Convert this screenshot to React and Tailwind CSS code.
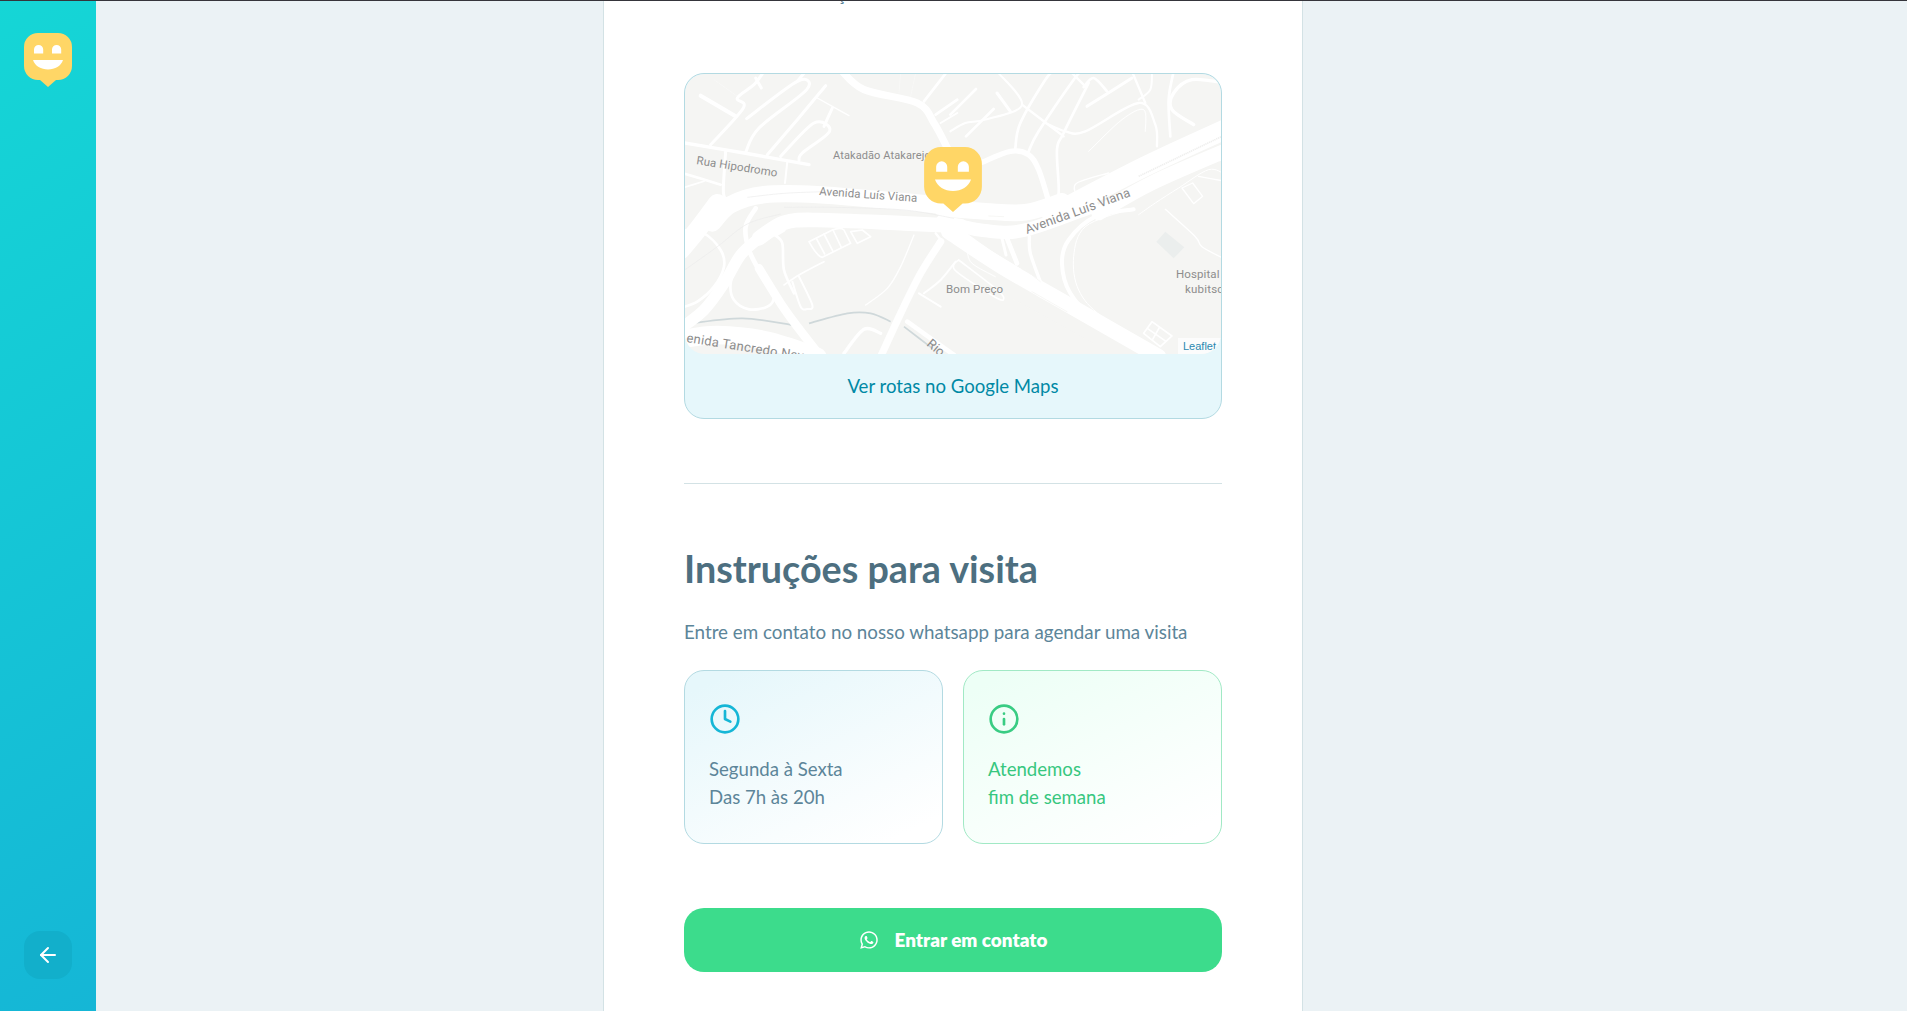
import React from 'react';
import { FiArrowLeft, FiClock, FiInfo } from 'react-icons/fi';
import { FaWhatsapp } from 'react-icons/fa';

// map drawing, traced in 3x crops of the map, one list per quadrant
const smooth = (pts) => {
  let d = `M${pts[0][0]} ${pts[0][1]}`;
  for (let i = 0; i < pts.length - 1; i++) {
    const a = pts[i - 1] || pts[i];
    const b = pts[i];
    const c = pts[i + 1];
    const e = pts[i + 2] || c;
    const c1 = [b[0] + (c[0] - a[0]) / 6, b[1] + (c[1] - a[1]) / 6];
    const c2 = [c[0] - (e[0] - b[0]) / 6, c[1] - (e[1] - b[1]) / 6];
    d += ` C${c1[0].toFixed(1)} ${c1[1].toFixed(1)} ${c2[0].toFixed(1)} ${c2[1].toFixed(1)} ${c[0]} ${c[1]}`;
  }
  return d;
};

const topLeft = [
  [10, [[-10, 208], [180, 240], [375, 275]]],
  [12, [[50, 68], [155, 130]]],
  [9, [[80, 215], [178, 105], [160, 75], [210, 35], [240, -5]]],
  [9, [[215, 15], [232, 45]]],
  [9, [[188, 137], [340, 25], [368, 50], [225, 165], [185, 238]]],
  [9, [[340, 25], [365, -5]]],
  [9, [[250, 245], [340, 140], [425, 38]]],
  [4, [[400, 75], [495, 128]]],
  [9, [[445, 105], [420, 160]]],
  [9, [[290, 250], [390, 150], [437, 175], [355, 240], [345, 262]]],
  [9, [[125, 235], [118, 350], [125, 380]]],
  [6, [[310, 265], [303, 330]]],
  [8, [[-5, 300], [110, 335]]],
  [5, [[-5, 345], [60, 325]]],
  [22, [[470, -10], [540, 50], [700, 90], [750, 150], [790, 225]]],
  [8, [[720, 85], [790, -5]]],
  [8, [[755, 125], [820, 80]]],
  [6, [[770, 150], [820, 120]]],
  [1, [[90, 20], [160, 70]]],
  [1, [[645, 60], [650, 0]]],
  [1, [[680, 70], [695, 0]]],
  // upper carriageway of the avenue
  [52, [[85, 450], [140, 395], [240, 365], [400, 365], [720, 392], [830, 405]]],
];

const topRight = [
  [8, [[-5, 125], [72, 48]]],
  [9, [[135, 60], [175, 115]]],
  [8, [[42, 190], [125, 108]]],
  [6, [[-5, 175], [40, 150], [100, 140], [210, 95], [135, -5]]],
  [16, [[90, 268], [175, 235], [230, 245], [260, 290], [290, 385]]],
  [8, [[190, 225], [205, 150], [280, 20], [305, -5]]],
  [8, [[230, 235], [260, 175], [365, 20], [390, -5]]],
  [7, [[210, 95], [335, 190]]],
  [7, [[355, -5], [400, 40]]],
  [8, [[410, 30], [335, 180], [315, 230], [320, 360], [300, 388]]],
  [7, [[280, 150], [340, 175], [400, 175], [560, 90], [610, 155], [615, 220]]],
  [9, [[405, 100], [540, 15]]],
  [8, [[395, 42], [425, 15], [465, 55]]],
  [7, [[540, -5], [580, 90]]],
  [6, [[600, -5], [595, 50], [560, 80]]],
  [3, [[410, 235], [510, 140], [575, 110], [580, 175]]],
  [10, [[820, 30], [720, 20], [665, 60], [660, 110], [725, 155]]],
  [8, [[665, -5], [650, 80], [655, 190]]],
  [4, [[370, 360], [375, 330], [470, 300]]],
  [3, [[820, 305], [770, 290], [680, 345], [610, 390], [560, 425]]],
  [4, [[740, 310], [820, 325]]],
  [50, [[-30, 405], [100, 415], [220, 418], [330, 385]]],
  [60, [[840, 160], [580, 280], [300, 425]]],
  [44, [[840, 225], [600, 330], [440, 420]]],
];

const bottomLeft = [
  [56, [[100, -20], [40, 60], [-10, 120]]],
  [8, [[-5, 60], [60, 70], [110, 120], [120, 170], [90, 230], [40, 275], [-5, 292]]],
  [44, [[830, 48], [660, 40], [400, 30], [300, 38], [225, 85]]],
  [34, [[225, 85], [170, 135], [120, 220], [60, 300], [-10, 355]]],
  [14, [[215, -5], [185, 50], [195, 120], [230, 190]]],
  [26, [[225, 175], [290, 280], [340, 350], [410, 440]]],
  [8, [[272, 75], [295, 100], [300, 180], [330, 250]]],
  [6, [[345, 200], [385, 285], [370, 297], [350, 290], [325, 215]]],
  [5, [[300, 225], [345, 195], [420, 155]]],
  [8, [[165, 140], [140, 220], [150, 270], [195, 298], [250, 290], [270, 260], [250, 220]]],
  [10, [[275, 75], [300, 60]]],
  [4, [[690, 75], [650, 170], [610, 235], [545, 285]]],
  [22, [[770, 95], [710, 190], [650, 310], [590, 440]]],
  [7, [[775, 95], [755, 70]]],
  [6, [[815, 155], [770, 210], [720, 250]]],
  [6, [[705, 250], [770, 290]]],
  [14, [[670, 335], [810, 435]]],
  [10, [[590, 370], [540, 358], [480, 430]]],
  [55, [[-10, 388], [100, 375], [250, 392], [400, 440]]],
];

const bottomRight = [
  [40, [[-30, 35], [100, 62], [220, 60], [420, -10]]],
  [46, [[-10, 65], [150, 170], [350, 285], [620, 440]]],
  [14, [[30, 68], [110, 125], [200, 180]]],
  [9, [[150, 85], [162, 135]]],
  [14, [[165, 85], [195, 160]]],
  [10, [[232, 80], [235, 130], [265, 215]]],
  [12, [[545, -2], [430, 20], [350, 90], [330, 160], [355, 250], [430, 330], [575, 425]]],
  [3, [[525, 0], [400, 50], [365, 140], [380, 240], [450, 320], [610, 415]]],
  [4, [[640, -2], [730, 80], [750, 110], [820, 148]]],
  [5, [[20, 150], [130, 235], [155, 262], [135, 265], [20, 190], [5, 165], [20, 150]]],
  [3, [[45, 120], [60, 160], [130, 200]]],
];

const Roads = ({ list, ox, oy }) => (
  <g transform={`translate(${ox} ${oy}) scale(0.3333)`} fill="none" stroke="#ffffff" strokeLinecap="round" strokeLinejoin="round">
    {list.map(([w, pts], i) => (
      <path key={i} d={smooth(pts)} strokeWidth={w} />
    ))}
  </g>
);

const MapDrawing = () => (
  <svg width="538" height="280" viewBox="0 0 538 280" className="block">
    <rect width="538" height="280" fill="#f5f5f3" />
    <g transform="translate(267 136) scale(0.3333)">
      <polygon points="640,65 697,112 665,145 613,95" fill="#ebeeed" />
    </g>
    <g transform="translate(-1 136) scale(0.3333)" fill="none" stroke="#cfd8da" strokeWidth="5">
      <path d={smooth([[20, 340], [175, 325], [325, 345]])} />
      <path d={smooth([[375, 340], [490, 310], [560, 310], [620, 335]])} />
      <path d={smooth([[660, 350], [745, 415]])} />
    </g>
    <Roads list={bottomLeft} ox={-1} oy={136} />
    <Roads list={bottomRight} ox={267} oy={136} />
    <Roads list={topLeft} ox={-1} oy={-1} />
    <Roads list={topRight} ox={267} oy={-1} />

    {/* fine lines, parking lots */}
    <g transform="translate(-1 136) scale(0.3333)" fill="none" stroke="#ffffff" strokeLinejoin="round" strokeLinecap="round" strokeWidth="5">
      <path d="M375 95 L445 60 Q470 50 480 60 L500 100 L415 142 Q400 140 375 95 Z" />
      <path d="M397 85 L422 132 M420 72 L447 124 M447 60 L472 112" />
      <path d="M500 65 L535 60 L560 80 L520 100 Z" />
    </g>
    <g transform="translate(-1 136) scale(0.3333)" fill="none" stroke="#ececeb" strokeWidth="2">
      <path d={smooth([[-5, 185], [100, 110], [190, 42], [290, 12]])} />
      <path d={smooth([[190, -38], [300, -50], [420, -55]])} />
      <path d={smooth([[300, -8], [450, -8], [660, 0], [810, 25]])} />
    </g>
    <g transform="translate(267 136) scale(0.3333)" fill="none">
      <g stroke="#ffffff" strokeWidth="5" strokeLinejoin="round">
        <path d="M600 335 L660 378 L625 410 L575 370 Z M586 355 L643 395 M622 353 L600 392" />
      </g>
      <g stroke="#f5f5f3" strokeWidth="2.5" strokeLinecap="round">
        <path d="M240 245 L345 305" />
        <path d="M215 175 L265 215" />
        <path d="M160 255 L430 405" />
        <path d="M110 18 L155 20" />
      </g>
    </g>
    <g transform="translate(267 -1) scale(0.3333)" fill="none" stroke="#ffffff" strokeLinejoin="round">
      <path d="M690 345 L722 330 L752 370 L725 392 Z" strokeWidth="4" />
      <path d="M560 310 L810 190" stroke="#efefee" strokeWidth="5" strokeDasharray="4 2" />
    </g>

    <g fill="#8d8d8d" fontSize="11.5" style={{ fontFamily: '"Roboto", sans-serif' }}>
      <text x="148" y="85" fontSize="11" letterSpacing="0.1">Atakadão Atakarejo</text>
      <text x="11" y="90" transform="rotate(9 11 90)" letterSpacing="0.15">Rua Hipodromo</text>
      <text x="134" y="121" transform="rotate(4 134 121)" letterSpacing="0.1">Avenida Luís Viana</text>
      <text x="342" y="160" fontSize="13" transform="rotate(-20 342 160)" letterSpacing="0.1">Avenida Luís Viana</text>
      <text x="261" y="219" letterSpacing="0.1">Bom Preço</text>
      <text x="491" y="204" letterSpacing="0.1">Hospital</text>
      <text x="500" y="219" letterSpacing="0.2">kubitsc</text>
      <text x="1" y="268" fontSize="13" transform="rotate(9 1 268)" letterSpacing="0.25">enida Tancredo Neves</text>
      <text x="241" y="271" fontSize="13" transform="rotate(40 241 271)">Rio</text>
    </g>
  </svg>
);

const Logo = ({ className }) => (
  <svg viewBox="0 0 48 54" className={className}>
    <path d="M14 0H34A14 14 0 0 1 48 14V33A14 14 0 0 1 34 47H32L24 54L16 47H14A14 14 0 0 1 0 33V14A14 14 0 0 1 14 0Z" fill="#FFD666" />
    <path d="M10 20.5V16.5A4.6 4.6 0 0 1 19.2 16.5V20.5ZM28 20.5V16.5A4.6 4.6 0 0 1 37.2 16.5V20.5Z" fill="#fff" />
    <path d="M9 27H39C37 33 31 36.5 24 36.5S11 33 9 27Z" fill="#fff" />
  </svg>
);

export default function App() {
  return (
    <div className="h-screen flex flex-col overflow-hidden bg-[#ebf2f5]" style={{ fontFamily: '"Lato", "Noto Sans", sans-serif' }}>
      <div className="h-px bg-[#35353b] shrink-0" />
      <div className="flex flex-1 min-h-0">
        <aside className="w-[96px] shrink-0 flex flex-col justify-between items-center py-8 bg-[linear-gradient(329.54deg,#15b6d6_0%,#15d6d6_100%)]">
          <Logo className="w-12 h-[54px]" />
          <button className="w-12 h-12 rounded-2xl bg-[#12afcb] flex items-center justify-center text-white">
            <FiArrowLeft size={24} />
          </button>
        </aside>

        <main className="flex-1 flex justify-center pr-[97px] min-w-0">
          <div className="w-[700px] shrink-0 bg-white border-x border-[#d3e2e5] px-20">
            <div className="h-[3px] overflow-hidden pl-[153px] text-lg leading-7 text-[#5c8599]">
              <div className="-mt-[21px]">ç</div>
            </div>

            <div className="mt-[69px] rounded-[20px] border border-[#b3dae2] bg-[#e6f7fb] overflow-hidden">
              <div className="relative rounded-[20px] overflow-hidden">
                <MapDrawing />
                <div className="absolute right-0 bottom-0 bg-white/70 px-[5px] text-[11px] leading-[16px] text-[#2a88b0]" style={{ fontFamily: '"Liberation Sans", sans-serif' }}>
                  Leaflet
                </div>
                <div className="absolute left-[239px] top-[73px]">
                  <Logo className="w-[58px] h-[65px]" />
                </div>
              </div>
              <div className="h-[64px] pt-[2px] flex items-center justify-center text-[18.6px] text-[#0089a5]">Ver rotas no Google Maps</div>
            </div>

            <div className="h-px bg-[#d3e2e5] mt-16 mb-[62px]" />

            <h2 className="text-[37.7px] leading-[46px] font-bold text-[#4d6f80]">Instruções para visita</h2>
            <p className="mt-[26px] text-[18.8px] leading-7 text-[#5c8599]">Entre em contato no nosso whatsapp para agendar uma visita</p>

            <div className="mt-6 grid grid-cols-2 gap-5">
              <div className="rounded-[20px] border border-[#b3dae2] px-6 py-8 text-[18.6px] leading-7 text-[#5c8599] bg-[linear-gradient(154.16deg,#e6f7fb_7.85%,#ffffff_91.03%)]">
                <FiClock size={32} className="mb-5 text-[#15b6d6]" />
                Segunda à Sexta
                <br />
                Das 7h às 20h
              </div>
              <div className="rounded-[20px] border border-[#a1e9c5] px-6 py-8 text-[18.6px] leading-7 text-[#37c77f] bg-[linear-gradient(154.16deg,#edfff6_7.85%,#ffffff_91.03%)]">
                <FiInfo size={32} className="mb-5 text-[#39cc83]" />
                Atendemos
                <br />
                fim de semana
              </div>
            </div>

            <button className="mt-16 w-full h-16 rounded-[20px] bg-[#3cdc8c] flex items-center justify-center gap-4 text-white text-[18.9px] font-extrabold">
              <FaWhatsapp size={20} />
              Entrar em contato
            </button>
          </div>
        </main>
      </div>
    </div>
  );
}
